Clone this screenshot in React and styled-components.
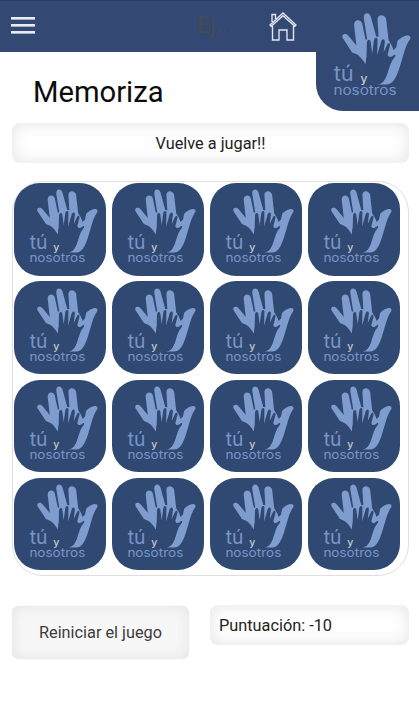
import React from "react";
import styled, { createGlobalStyle } from "styled-components";

const GlobalStyle = createGlobalStyle`
  * { box-sizing: border-box; }
  body { margin: 0; background: #fff; font-family: Roboto, sans-serif; color: #222; }
`;

const Screen = styled.div`
  height: 719px;
  overflow: hidden;
  background: #fff;
`;

const Header = styled.header`
  position: relative;
  display: flex;
  align-items: flex-start;
  height: 52px;
  background: #334872;
  border-top: 1px solid #273c5d;
`;

const MenuButton = styled.button`
  display: flex;
  flex-direction: column;
  gap: 4px;
  margin: 16px 0 0 11px;
  padding: 0;
  width: 24px;
  border: 0;
  background: none;
`;

const MenuBar = styled.span`
  height: 3px;
  background: #e9edf1;
  border-bottom: 1px solid #a5b1c2;
`;

const Caption = styled.span`
  margin: 11px 0 0 162px;
  width: 72px;
  font-size: 23px;
  line-height: 27px;
  color: #474a50;
`;

const HomeIcon = styled.svg`
  width: 30px;
  height: 30px;
  margin-top: 10px;
  margin-left: -1px;
`;

const Brand = styled.div`
  position: absolute;
  top: 0;
  right: 0;
  width: 103px;
  height: 110px;
  padding-top: 5px;
  background: #314973;
  border-bottom-left-radius: 27px;
  overflow: hidden;
`;

const Logo = styled.svg`
  display: block;
  width: ${(p) => p.$size}px;
  height: ${(p) => p.$size}px;
`;

const Title = styled.h1`
  margin: 22px 0 0 33px;
  font-size: 29.2px;
  line-height: 36px;
  font-weight: 400;
  color: #0c0c0c;
`;

const Panel = styled.div`
  border-radius: 8px;
  background: #fefefe;
  box-shadow: inset 0 0 15px #e4e4e4;
  font-size: 16.3px;
  color: #222;
`;

const Message = styled(Panel)`
  margin: 13px 10px 0 12px;
  height: 40px;
  line-height: 41px;
  text-align: center;
`;

const Board = styled.main`
  display: grid;
  grid-template-columns: repeat(4, 92px);
  grid-auto-rows: 92.5px;
  column-gap: 6px;
  row-gap: 5.8px;
  margin: 18px 10px 0 12px;
  padding: 1px;
  height: 395px;
  border: 1px solid #dfdfdf;
  border-radius: 31px;
`;

const Card = styled.button`
  padding: 0;
  border: 0;
  border-radius: 26px;
  background: #304972;
  overflow: hidden;
`;

const Footer = styled.footer`
  display: flex;
  align-items: flex-start;
  gap: 21px;
  margin: 29px 10px 0 12px;
`;

const Restart = styled.button`
  margin-top: 1px;
  width: 177px;
  height: 53px;
  padding: 0;
  border: 0;
  border-radius: 7px;
  background: #f7f7f7;
  box-shadow: inset 0 0 14px #e2e2e2, 0 0 1px #ddd;
  font: 16.3px Roboto, sans-serif;
  color: #3c3c3c;
`;

const Score = styled(Panel)`
  width: 199px;
  height: 40px;
  padding-left: 9px;
  line-height: 41px;
`;

function HandLogo({ size }) {
  return (
    <Logo $size={size} viewBox="49 20 311 311" aria-label="tú y nosotros">
      <g transform="translate(75 15)">
        <path
          fill="#7f9cce"
          d="M54 101C48 89 62 84 70 93L95 123L88 63C86 45 107 42 112 57L122 105L127 105L117 42C115 24 133 22 138 37L154 96L161 97L158 46C157 29 180 28 184 45L191 107L200 122L206 137L214 128L218 109C226 101 238 93 247 93C258 93 259 101 252 109C240 128 234 159 224 189C214 220 203 240 184 240L159 240C181 236 187 209 192 183L196 160L182 154L160 158L145 154L125 158L122 179C113 164 102 151 92 148L82 144Z"
        />
        <path
          fill="#304972"
          d="M125 158L126 118C126 105 134 103 137 110L142 148L147 110C148 98 156 97 158 104L157 152L168 114C170 103 179 101 180 111L176 144L187 120C191 113 197 115 195 124L188 151C192 161 200 157 206 152C213 148 213 154 208 160C197 172 194 191 186 211C180 228 170 238 158 238L123 193Z"
        />
      </g>
      <g fontFamily="Inter, sans-serif" fill="#7895c8">
        <text x="102" y="243" fontSize="63" fontWeight="400" textLength="60" lengthAdjust="spacingAndGlyphs">tú</text>
        <text x="101" y="286" fontSize="39" textLength="189" lengthAdjust="spacingAndGlyphs">nosotros</text>
        <text x="182" y="250" fontSize="36" fontWeight="500" fill="#c6cad2">y</text>
      </g>
    </Logo>
  );
}

export default function App() {
  return (
    <Screen>
      <GlobalStyle />
      <Header>
        <MenuButton aria-label="Menú">
          <MenuBar />
          <MenuBar />
          <MenuBar />
        </MenuButton>
        <Caption>Ej...</Caption>
        <HomeIcon viewBox="0 0 30 30" fill="none" stroke="#e0e5ee" strokeWidth="1.4">
          <path d="M2 14L15 2L28 14L26.8 15.3L15 4.8L3.2 15.3ZM4 11V3.5H7.5V8M4.5 15V29H11V19H19V29H25.5V15" />
        </HomeIcon>
        <Brand>
          <HandLogo size={104} />
        </Brand>
      </Header>
      <Title>Memoriza</Title>
      <Message>Vuelve a jugar!!</Message>
      <Board>
        {Array.from({ length: 16 }, (_, i) => (
          <Card key={i}>
            <HandLogo size={92} />
          </Card>
        ))}
      </Board>
      <Footer>
        <Restart>Reiniciar el juego</Restart>
        <Score>Puntuación: -10</Score>
      </Footer>
    </Screen>
  );
}
